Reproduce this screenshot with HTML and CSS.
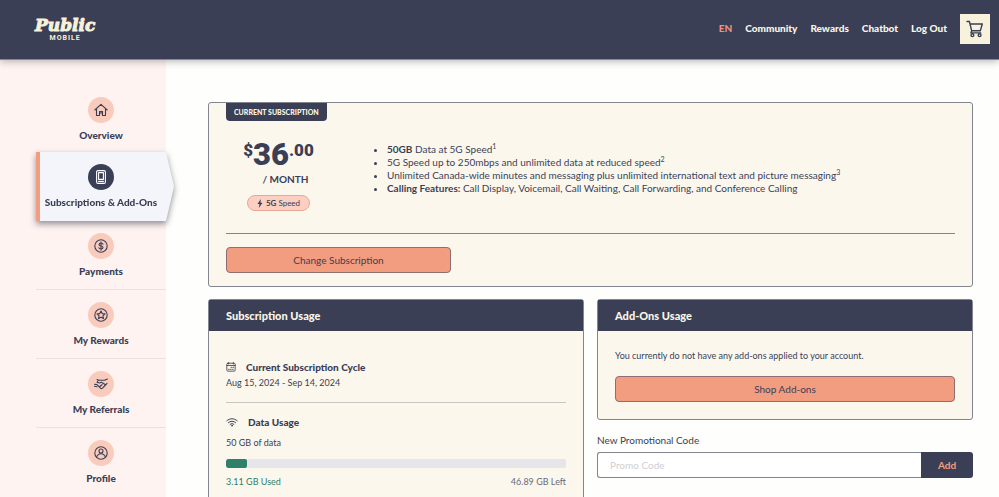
FILE: index.html
```html
<!DOCTYPE html>
<html lang="en">
<head>
<meta charset="utf-8">
<meta name="viewport" content="width=device-width, initial-scale=1">
<title>Public Mobile – Subscriptions &amp; Add-Ons</title>
<link rel="stylesheet" href="styles.css">
</head>
<body>
<header class="topbar">
  <a class="logo" href="#"><span class="logo-name">Public</span><span class="logo-sub">MOBILE</span></a>
  <nav class="topnav">
    <a class="lang" href="#">EN</a>
    <a href="#">Community</a>
    <a href="#">Rewards</a>
    <a href="#">Chatbot</a>
    <a href="#">Log Out</a>
    <a class="cart" href="#" aria-label="Cart">
      <svg viewBox="0 0 18 18" width="18" height="18"><path d="M1 1.5h2.4l2.3 9.3h8.6l2-6.8H4.1M5.7 10.8l-.8 2.1h9.8"/><circle cx="6.4" cy="15.2" r="1.4"/><circle cx="13.6" cy="15.2" r="1.4"/></svg>
    </a>
  </nav>
</header>
<div class="shell">
  <nav class="sidebar">
    <a class="side-item" href="#">
      <span class="badge"><svg viewBox="0 0 14 14"><path d="M.8 7 7 1.4 13.2 7M2.5 5.8v6.7h3V8.6h3v3.9h3V5.8M7 8.6v2"/></svg></span>
      <span>Overview</span>
    </a>
    <div class="active-wrap">
      <a class="side-item active" href="#" aria-current="page">
        <span class="badge"><svg viewBox="0 0 14 14"><rect x="2.6" y=".6" width="8.8" height="12.8" rx="1.4"/><rect x="4.6" y="2.6" width="4.8" height="6.8"/><path d="M4.6 11.4h1M6.6 11.4h.8M8.4 11.4h1"/></svg></span>
        <span>Subscriptions &amp; Add-Ons</span>
      </a>
    </div>
    <a class="side-item" href="#">
      <span class="badge"><svg viewBox="0 0 14 14"><circle cx="7" cy="7" r="6.2"/><path d="M9 5.2C8.700 4.400 8 4 7 4 5.800 4 5 4.600 5 5.500S5.800 6.800 7 7s2 .6 2 1.500S8.200 10 7 10s-2-.5-2.200-1.300M7 2.800v8.400"/></svg></span>
      <span>Payments</span>
    </a>
    <a class="side-item" href="#">
      <span class="badge"><svg viewBox="0 0 14 14"><circle cx="7" cy="7" r="6.2"/><path d="M7 3l1.200 2.600 2.800.3-2.100 1.900.6 2.800L7 9.200l-2.500 1.400.6-2.800L3 5.900l2.800-.3z"/></svg></span>
      <span>My Rewards</span>
    </a>
    <a class="side-item" href="#">
      <span class="badge"><svg viewBox="0 0 14 14"><path d="M13.500 2 10.500 3.200 4.500 3 3 5.200 5.500 6 7.500 5.200 11.500 7.800M4.500 3 3 2.500M.5 7.300 3 7.600 7 11.600 8.500 11.200 11.500 8 13 6.400M.5 9.300 3 9.800M5.800 9.500 8 7.700"/></svg></span>
      <span>My Referrals</span>
    </a>
    <a class="side-item" href="#">
      <span class="badge"><svg viewBox="0 0 14 14"><circle cx="7" cy="7" r="6.200"/><circle cx="7" cy="5" r="2"/><path d="M2.600 11.200C3.300 9 5 7.800 7 7.800s3.700 1.200 4.400 3.400"/></svg></span>
      <span>Profile</span>
    </a>
  </nav>
  <main class="content">
    <section class="card plan">
      <h2 class="tag">CURRENT SUBSCRIPTION</h2>
      <div class="plan-body">
        <div class="price">
          <div class="amount"><span class="minor">$</span><span class="major">36</span><span class="minor">.00</span></div>
          <div class="per">/ MONTH</div>
          <div class="pill"><svg viewBox="0 0 6 9" width="6" height="9"><path d="M3.800 0 .5 5h2L1.800 9 5.500 3.800h-2z"/></svg><span><b>5G</b> Speed</span></div>
        </div>
        <ul class="features">
          <li><b>50GB</b> Data at 5G Speed<sup>1</sup></li>
          <li>5G Speed up to 250mbps and unlimited data at reduced speed<sup>2</sup></li>
          <li>Unlimited Canada-wide minutes and messaging plus unlimited international text and picture messaging<sup>3</sup></li>
          <li><b>Calling Features:</b> Call Display, Voicemail, Call Waiting, Call Forwarding, and Conference Calling</li>
        </ul>
      </div>
      <div class="plan-actions"><button class="btn change" type="button">Change Subscription</button></div>
    </section>
    <div class="columns">
      <section class="card usage">
        <h2 class="card-head">Subscription Usage</h2>
        <div class="usage-body">
          <div class="cycle">
            <h3><svg viewBox="0 0 12 12" width="10" height="10"><rect x="1" y="1.500" width="10" height="9.500" rx="1.300"/><path d="M1 4.200h10M3.200.6v1.800M8.800.6v1.800M6 6.400h.9M8.300 6.400h.9M3 8.800h.9M5.400 8.800h.9M7.800 8.800h.9"/></svg>Current Subscription Cycle</h3>
            <p>Aug 15, 2024 - Sep 14, 2024</p>
          </div>
          <div class="data">
            <h3><svg viewBox="0 0 12 12" width="12" height="12"><path d="M.8 4.800C4 2 8 2 11.200 4.800M2.400 6.700c2.200-1.900 5-1.900 7.200 0M4.100 8.400c1.200-1 2.600-1 3.800 0"/><circle cx="6" cy="9.700" r=".5"/></svg>Data Usage</h3>
            <p>50 GB of data</p>
            <div class="meter" role="img" aria-label="3.11 of 50 GB used"><div class="meter-fill" style="width:6.22%"></div></div>
            <div class="totals"><span class="used">3.11 GB Used</span><span class="left">46.89 GB Left</span></div>
          </div>
        </div>
      </section>
      <div class="side-col">
        <section class="card addons">
          <h2 class="card-head">Add-Ons Usage</h2>
          <div class="addons-body">
            <p>You currently do not have any add-ons applied to your account.</p>
            <button class="btn" type="button">Shop Add-ons</button>
          </div>
        </section>
        <form class="promo">
          <label for="promo">New Promotional Code</label>
          <div class="promo-row">
            <input id="promo" type="text" placeholder="Promo Code">
            <button type="button">Add</button>
          </div>
        </form>
      </div>
    </div>
  </main>
</div>
</body>
</html>
```
FILE: styles.css
```css
:root {
  --navy: #3a3f56;
  --cream: #fcf7ed;
  --coral: #f29c80;
  --line: #83858e;
}
* { box-sizing: border-box; }
body {
  margin: 0;
  height: 100vh;
  display: flex;
  flex-direction: column;
  overflow: hidden;
  background: #fefefc;
  color: var(--navy);
  font: 10px/13px Lato, "Liberation Sans", sans-serif;
}
h2, h3, p, ul { margin: 0; padding: 0; }
a { color: inherit; text-decoration: none; }
button, input { font: inherit; color: inherit; }
svg { flex: none; fill: none; stroke: currentColor; stroke-width: 1; stroke-linejoin: round; stroke-linecap: round; }

.topbar {
  position: relative;
  z-index: 2;
  flex: none;
  height: 60px;
  display: flex;
  align-items: center;
  justify-content: space-between;
  padding: 0 9px 2px 35px;
  background: var(--navy);
  border-bottom: 1px solid #85889a;
  box-shadow: 0 2px 7px rgba(40, 40, 55, .3);
}
.logo { display: flex; flex-direction: column; align-items: center; padding-top: 2px; color: #f8f2db; }
.logo-name { font: italic bold 17px/17px "DejaVu Serif", serif; -webkit-text-stroke: 1px; }
.logo-sub { font: bold 7px/8px Roboto, sans-serif; letter-spacing: 1px; }
.topnav { display: flex; align-items: center; gap: 13px; color: #fbf6e6; font-weight: 900; }
.lang { color: #f0907c; }
.cart { width: 30px; height: 30px; display: grid; place-items: center; background: #f8f1dc; color: var(--navy); }
.cart svg { stroke-width: 1.4; }

.shell { flex: 1; min-height: 0; display: flex; }
.sidebar { flex: none; width: 166px; padding: 25px 0 0 36px; background: #fef3f1; }
.side-item {
  height: 69px;
  display: flex;
  flex-direction: column;
  align-items: center;
  padding-top: 12px;
  gap: 4px;
  border-bottom: 1px solid #eadfe2;
  font-weight: 900;
  line-height: 16px;
  white-space: nowrap;
}
.sidebar > .side-item:first-child { height: 67px; border: 0; }
.sidebar > .side-item:last-child { border: 0; }
.badge { width: 26px; height: 26px; display: grid; place-items: center; border-radius: 50%; background: #f9cbbc; }
.badge svg { width: 14px; height: 14px; stroke-width: 1.1; }
.active-wrap { margin-right: -8px; filter: drop-shadow(0 3px 3px rgba(40, 40, 55, .5)); }
.side-item.active {
  padding-right: 12px;
  border-bottom: 0;
  border-left: 4px solid var(--coral);
  background: #f4f5fa;
  clip-path: polygon(0 0, calc(100% - 8px) 0, 100% 50%, calc(100% - 8px) 100%, 0 100%);
}
.active .badge { background: var(--navy); color: #fff; }

.content { flex: 1; min-width: 0; padding: 42px 26px 0 42px; }
.card { border: 1px solid var(--line); border-radius: 3px; background: var(--cream); }
.plan { height: 185px; padding: 0 17px; margin-bottom: 12px; }
.tag {
  width: max-content;
  padding: 2px 8px;
  border-radius: 0 0 4px 4px;
  background: var(--navy);
  color: #fbf6e6;
  font-size: 7px;
  font-weight: 900;
  line-height: 14px;
}
.plan-body { display: flex; height: 113px; border-bottom: 1px solid var(--line); }
.price { flex: none; width: 105px; display: flex; flex-direction: column; align-items: center; padding-top: 19px; }
.amount { display: flex; font-family: Roboto, sans-serif; font-weight: 900; }
.major { font-size: 31px; line-height: 30px; }
.minor { font-size: 17px; line-height: 20px; }
.per { margin: 3px 0 9px 14px; font-weight: 700; }
.pill {
  display: flex;
  align-items: center;
  gap: 3px;
  height: 16px;
  padding: 0 9px;
  border: 1px solid #e9a893;
  border-radius: 8px;
  background: #fbcfc1;
  font-size: 8px;
}
.pill svg { fill: currentColor; stroke: none; }
.features { padding: 22px 0 0 56px; }
sup { font-size: 7px; line-height: 0; }
.btn {
  display: block;
  width: 100%;
  height: 26px;
  padding: 0;
  border: 1px solid #8d6e72;
  border-radius: 4px;
  background: var(--coral);
}
.plan-actions { padding-top: 13px; }
.change { width: 225px; }

.columns { display: grid; grid-template-columns: 1fr 1fr; gap: 13px; }
.card-head {
  height: 31px;
  padding: 0 17px;
  background: var(--navy);
  color: #fbf6e6;
  font-size: 11px;
  font-weight: 900;
  line-height: 31px;
}
.usage-body { padding: 28px 17px 20px; font-size: 9px; }
h3 { display: flex; align-items: center; gap: 10px; font-size: 10px; font-weight: 900; line-height: 16px; }
.cycle { padding-bottom: 13px; border-bottom: 1px solid #c9c5c0; }
.cycle p { margin-top: 1px; }
.data { padding-top: 11px; }
.data p { margin: 6px 0 10px; }
.meter { height: 9px; border-radius: 2px; background: #e6e6ea; overflow: hidden; }
.meter-fill { height: 100%; border-radius: 2px; background: #2f8069; }
.totals { display: flex; justify-content: space-between; margin-top: 7px; }
.used { color: #2f8069; }
.left { color: #686b7b; }
.addons-body { padding: 18px 17px 17px; font-size: 9px; }
.addons-body .btn { margin-top: 14px; font-size: 10px; }
.promo { margin-top: 12px; }
.promo label { display: block; line-height: 16px; }
.promo-row { display: flex; margin-top: 4px; height: 26px; }
.promo input { flex: 1; min-width: 0; padding: 0 12px; border: 1px solid var(--line); border-right: 0; border-radius: 3px 0 0 3px; background: #fff; }
.promo input::placeholder { color: #cfcfd2; opacity: 1; }
.promo button { width: 52px; padding: 0; border: 0; border-radius: 0 3px 3px 0; background: var(--navy); color: var(--coral); font-weight: 700; }
```
